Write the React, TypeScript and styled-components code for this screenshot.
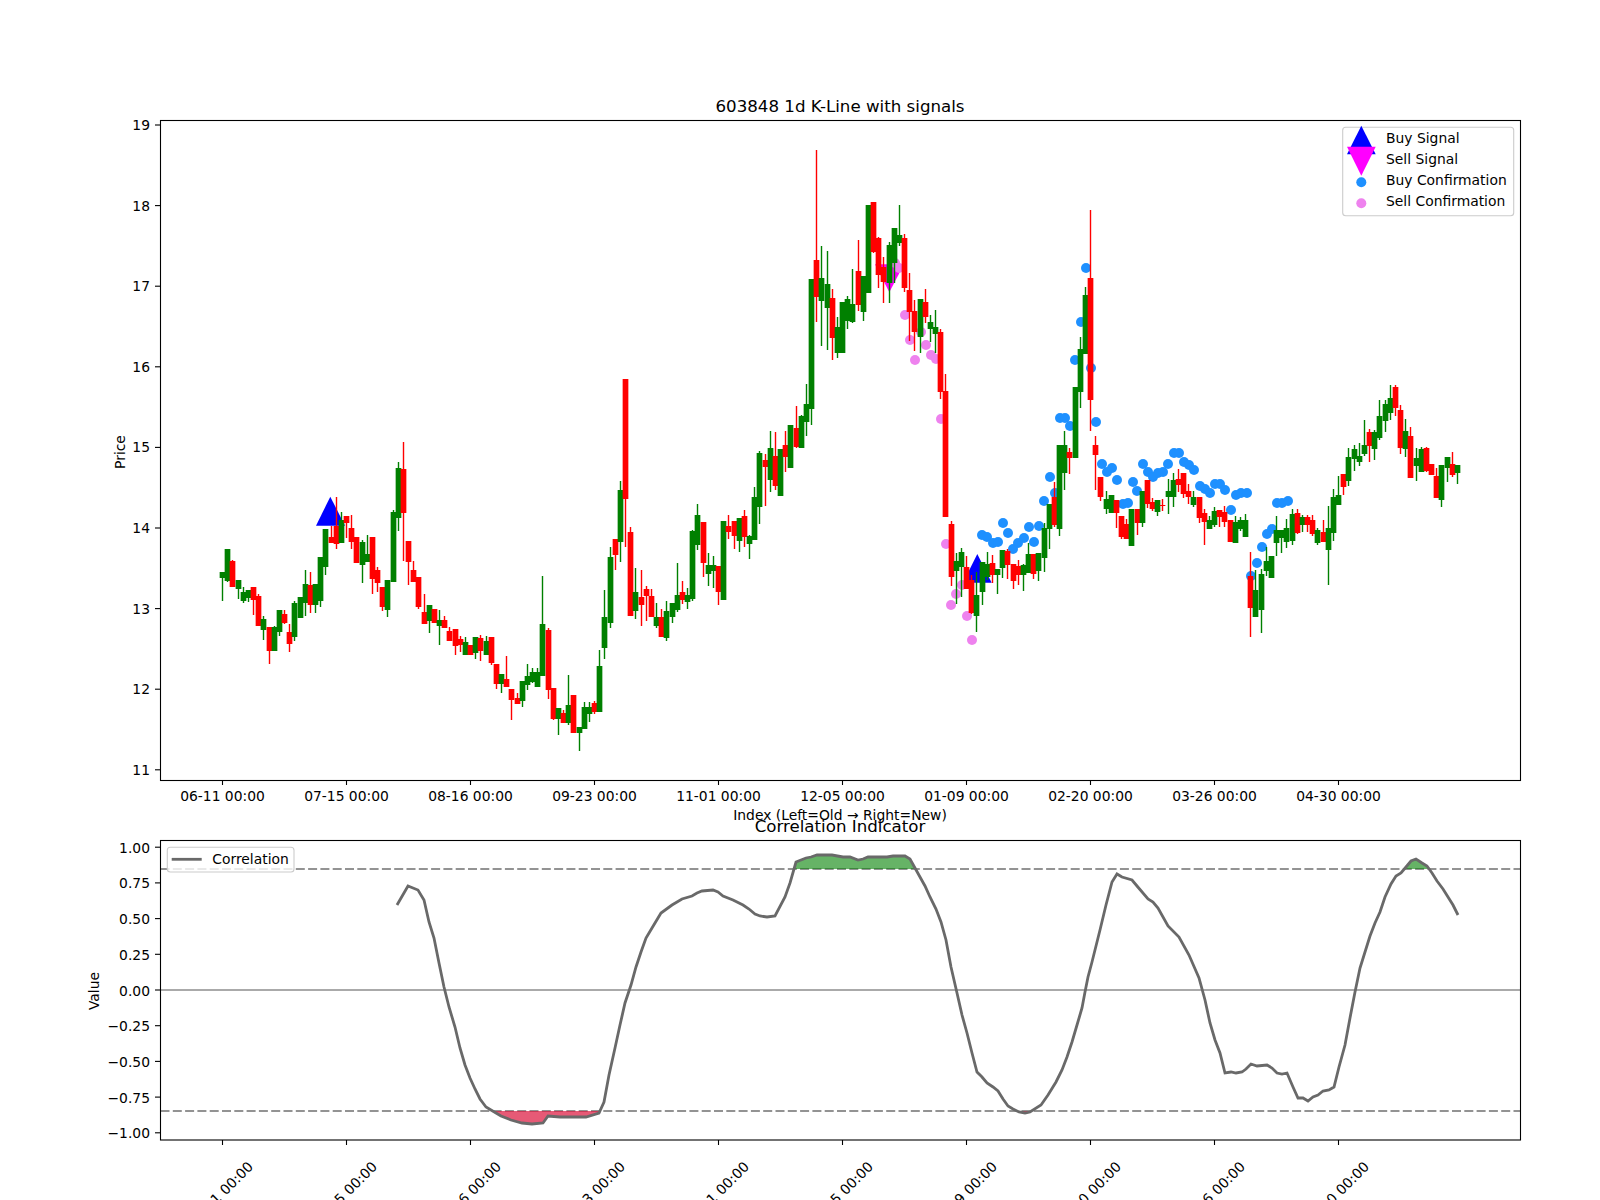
import React from "react";
import styled, { createGlobalStyle } from "styled-components";

const GlobalStyle = createGlobalStyle`
  html, body {
    margin: 0;
    padding: 0;
    background: #fff;
    overflow: hidden;
  }
`;

const Figure = styled.svg`
  display: block;
  width: 1600px;
  height: 1200px;
  font-family: "DejaVu Sans", sans-serif;
`;

const Spine = styled.rect`
  fill: none;
  stroke: #000;
  stroke-width: 1.1;
`;

const Tick = styled.line`
  stroke: #000;
  stroke-width: 1.1;
`;

const Label = styled.text<{ $size?: number; $anchor?: string }>`
  font-size: ${(p) => p.$size ?? 13.89}px;
  text-anchor: ${(p) => p.$anchor ?? "middle"};
  fill: #000;
`;

const Body = styled.rect<{ $up: boolean }>`
  fill: ${(p) => (p.$up ? "#ff0000" : "#008000")};
`;

const Wick = styled.line<{ $up: boolean }>`
  stroke: ${(p) => (p.$up ? "#ff0000" : "#008000")};
  stroke-width: 1.4;
`;

const Dot = styled.circle<{ $sell?: boolean }>`
  fill: ${(p) => (p.$sell ? "#ee82ee" : "#1e90ff")};
`;

const Marker = styled.polygon<{ $sell?: boolean }>`
  fill: ${(p) => (p.$sell ? "#ff00ff" : "#0000ff")};
`;

const LegendBox = styled.rect`
  fill: #fff;
  fill-opacity: 0.8;
  stroke: #ccc;
  stroke-width: 1.1;
`;

const Threshold = styled.line`
  stroke: #808080;
  stroke-opacity: 0.85;
  stroke-width: 2.1;
  stroke-dasharray: 9 3.3;
`;

const ZeroLine = styled.line`
  stroke: #aaaaaa;
  stroke-width: 2.1;
`;

const CorrLine = styled.polyline`
  fill: none;
  stroke: #696969;
  stroke-width: 2.8;
`;

const CorrFill = styled.polygon<{ $high?: boolean }>`
  fill: ${(p) => (p.$high ? "#008000" : "#dc143c")};
  fill-opacity: ${(p) => (p.$high ? 0.6 : 0.7)};
`;

const LegendLine = styled.line`
  stroke: #696969;
  stroke-width: 2.8;
`;

// g / r, body top, body bottom, wick high, wick low (screen y)
type Candle = [string, number, number, number?, number?];

const CANDLES: Candle[] = [
  ["g", 572, 578, 572, 601], ["g", 549, 581, 549, 582], ["r", 561, 587, 560], ["g", 580, 589, 580, 599],
  ["g", 592, 601, 587, 603], ["g", 590, 598, 590, 602], ["r", 587, 600, 587, 615], ["r", 596, 626, 594],
  ["g", 619, 630, 616, 640], ["r", 627, 651, 627, 664], ["g", 627, 651, 626], ["g", 610, 632, 610, 636],
  ["r", 614, 623, 610, 624], ["r", 632, 644, 624, 652], ["g", 603, 637, 601, 641], ["g", 597, 618],
  ["g", 584, 603, 570, 616], ["r", 585, 605, 572, 613], ["g", 584, 605, 584, 613], ["g", 557, 601, 557, 607],
  ["g", 529, 567, 529, 575], ["r", 537, 543, 526], ["r", 526, 544, 497, 549], ["g", 520, 543, 512],
  ["r", 516, 523, 516, 538], ["r", 528, 542, 515, 549], ["r", 537, 563], ["g", 542, 565, 540, 583],
  ["g", 554, 562, 535], ["r", 537, 579, 537, 594], ["r", 570, 583, 567, 592], ["r", 587, 607, 587, 611],
  ["g", 580, 610, 580, 617], ["g", 512, 582, 510], ["g", 468, 518, 462, 531], ["r", 469, 513, 442, 561],
  ["r", 541, 562, 541, 585], ["r", 570, 582, 561], ["r", 577, 607, 577, 609], ["r", 612, 624, 594],
  ["g", 605, 621, 605, 633], ["r", 609, 623], ["g", 620, 626, 610, 645], ["r", 620, 628, 616],
  ["r", 631, 641, 627], ["r", 629, 646, 629, 655], ["r", 639, 645, 636, 652], ["g", 642, 655, 637],
  ["r", 645, 655], ["g", 637, 653, 637, 659], ["r", 638, 651, 635, 661], ["g", 641, 655, 636],
  ["r", 637, 663, 637, 665], ["r", 664, 684, 664, 689], ["g", 674, 684, 674, 693], ["r", 679, 687, 656],
  ["r", 689, 700, 689, 720], ["r", 698, 704, 693], ["g", 681, 701, 681, 707], ["g", 676, 685, 664, 690],
  ["g", 672, 682, 668, 683], ["g", 672, 687, 668], ["g", 624, 676, 576], ["r", 630, 690, 628, 699],
  ["r", 688, 719, 688, 720], ["g", 708, 719, 708, 735], ["r", 713, 723, 710], ["g", 705, 723, 675, 725],
  ["r", 695, 733], ["g", 727, 733, 727, 751], ["g", 707, 729, 702], ["g", 707, 714, 702, 722],
  ["r", 703, 712, 701, 714], ["g", 666, 712, 650], ["g", 617, 648, 590, 659], ["g", 557, 623, 547, 628],
  ["r", 539, 555, 539, 570], ["g", 490, 542, 481, 562], ["r", 379, 499, 379, 547], ["r", 532, 616, 527],
  ["g", 592, 611, 568, 619], ["r", 597, 605, 570, 626], ["r", 589, 596, 586, 621], ["r", 596, 617, 589],
  ["g", 617, 626, 603, 628], ["r", 617, 637, 609], ["g", 611, 638, 601, 641], ["g", 603, 617, 603, 623],
  ["g", 595, 610, 563, 612], ["r", 592, 600, 581, 604], ["g", 595, 602, 588, 609], ["g", 531, 599, 530, 601],
  ["g", 515, 545, 504, 550], ["r", 522, 563, 522, 577], ["g", 565, 574, 553, 586], ["g", 565, 571, 556, 588],
  ["r", 566, 592, 566, 605], ["g", 521, 600], ["r", 526, 532, 515, 539], ["r", 521, 536, 521, 549],
  ["g", 518, 541, 518, 552], ["r", 516, 537, 510, 547], ["g", 536, 544, 535, 559], ["g", 497, 540, 487],
  ["g", 453, 507, 451, 524], ["r", 460, 467, 454, 506], ["g", 448, 480, 431, 492], ["r", 456, 486, 432, 490],
  ["g", 449, 496], ["r", 445, 457, 431, 472], ["g", 425, 468], ["r", 428, 447, 406, 448],
  ["g", 416, 448, 415], ["g", 404, 422, 384, 436], ["g", 279, 409, 279, 425], ["r", 260, 297, 150, 322],
  ["g", 278, 301, 246, 346], ["g", 284, 308, 251, 350], ["r", 298, 338, 289, 360], ["g", 327, 353, 317, 358],
  ["g", 302, 353], ["g", 299, 321, 296, 329], ["g", 304, 322, 269, 323], ["r", 271, 305, 240, 311],
  ["g", 276, 312, 276, 321], ["g", 205, 293], ["r", 202, 252, 202, 253], ["r", 238, 275, 237, 288],
  ["r", 267, 282, 257, 303], ["g", 245, 283, 242, 303], ["g", 228, 263, 228, 283], ["g", 235, 243, 205, 246],
  ["r", 238, 288, 234, 292], ["r", 290, 312, 273, 341], ["r", 311, 332, 300, 351], ["g", 299, 337, 299, 353],
  ["r", 302, 317, 289, 323], ["g", 322, 329, 315, 342], ["g", 327, 334, 310, 353], ["r", 332, 392, 329, 399],
  ["r", 391, 517, 374], ["r", 524, 577, 521, 586], ["g", 561, 571, 553, 604], ["g", 552, 567, 548, 597],
  ["r", 567, 589, 556], ["r", 580, 613, 575, 614], ["g", 595, 616, 572, 632], ["g", 562, 592, 562, 605],
  ["g", 564, 577, 552, 580], ["r", 563, 575, 555, 583], ["g", 569, 575, 569, 594], ["g", 550, 568, 550, 578],
  ["r", 551, 565, 549, 579], ["r", 564, 581, 564, 589], ["r", 566, 575, 560, 585], ["g", 565, 575, 564, 591],
  ["g", 554, 573, 543], ["r", 554, 574, 554, 579], ["g", 553, 571, 553, 581], ["g", 528, 558, 523, 572],
  ["g", 504, 529, 504, 549], ["r", 497, 525, 482, 527], ["g", 445, 529, 445, 536], ["g", 445, 473, 431, 490],
  ["r", 452, 458, 448, 474], ["g", 387, 458], ["g", 349, 392, 337, 408], ["g", 295, 354, 287],
  ["r", 278, 400, 210, 431], ["r", 445, 455, 436, 490], ["r", 477, 497, 477, 501], ["g", 499, 509, 491, 514],
  ["g", 495, 513], ["r", 500, 513, 500, 528], ["r", 516, 537, 516, 539], ["r", 524, 539, 519],
  ["g", 509, 546], ["r", 509, 523, 509, 535], ["g", 491, 523, 491, 527], ["r", 480, 504, 480, 508],
  ["r", 502, 509, 498, 511], ["g", 500, 512, 500, 516], ["r", 505, 506, 499, 511], ["g", 491, 497, 479, 514],
  ["g", 480, 497, 473, 507], ["r", 479, 485, 469, 492], ["r", 473, 494, 473, 498], ["r", 491, 497, 484, 504],
  ["g", 497, 505, 491, 507], ["r", 497, 518, 497, 523], ["r", 513, 522, 509, 545], ["g", 520, 529, 516],
  ["g", 511, 525, 507, 527], ["r", 510, 517, 510, 527], ["r", 512, 522, 506, 527], ["r", 520, 542],
  ["g", 522, 543, 516], ["g", 520, 529, 517, 531], ["g", 520, 537, 514], ["r", 576, 608, 552, 637],
  ["g", 590, 617, 570], ["g", 574, 610, 569, 633], ["g", 561, 571, 547, 576], ["g", 556, 578],
  ["g", 530, 543, 516, 556], ["g", 530, 538, 530, 553], ["g", 528, 542, 519, 548], ["g", 514, 541, 509, 545],
  ["r", 513, 533, 509, 534], ["g", 517, 525, 515, 532], ["r", 517, 525, 515, 532], ["r", 520, 534, 515, 536],
  ["g", 530, 543, 528, 545], ["r", 532, 542, 520], ["g", 528, 550, 506, 585], ["g", 497, 533, 489, 541],
  ["g", 495, 505, 476], ["r", 474, 487, 474, 495], ["g", 457, 481, 448, 486], ["g", 449, 459, 445, 471],
  ["g", 456, 462, 443, 466], ["g", 445, 454, 420, 456], ["r", 432, 446, 429, 462], ["g", 432, 449, 430, 460],
  ["g", 416, 438, 400, 440], ["g", 404, 421, 400, 432], ["g", 398, 413, 385, 420], ["r", 387, 408, 385, 416],
  ["r", 410, 448, 405, 454], ["g", 431, 449, 419, 457], ["r", 436, 478, 427], ["g", 458, 466, 448, 481],
  ["g", 449, 472, 447], ["r", 448, 471, 447, 472], ["r", 464, 475], ["r", 476, 498, 468],
  ["g", 465, 500, 465, 507], ["g", 457, 468, 457, 482], ["r", 464, 475, 452, 477], ["g", 465, 473, 465, 484],
];

const SELL_DOTS = [
  [895, 263], [899, 268], [905, 315], [910, 340], [915, 360], [921, 332], [926, 345], [931, 355],
  [936, 359], [941, 419], [946, 544], [951, 605], [956, 594], [962, 585], [967, 616], [972, 640],
];

const BUY_DOTS = [
  [982, 535], [987, 537], [993, 543], [998, 542], [1003, 523], [1008, 533], [1013, 549], [1018, 543],
  [1024, 538], [1029, 527], [1034, 542], [1039, 526], [1044, 501], [1050, 477], [1055, 493], [1060, 418],
  [1065, 418], [1070, 426], [1075, 360], [1081, 322], [1086, 268], [1091, 368], [1096, 422], [1102, 464],
  [1107, 472], [1112, 468], [1117, 480], [1123, 504], [1128, 503], [1133, 482], [1137, 491], [1143, 464],
  [1148, 472], [1153, 477], [1158, 473], [1163, 472], [1168, 464], [1174, 453], [1179, 453], [1184, 462],
  [1189, 465], [1194, 470], [1200, 486], [1205, 489], [1210, 493], [1215, 484], [1220, 484], [1225, 490],
  [1231, 510], [1236, 495], [1241, 493], [1247, 493], [1251, 576], [1257, 563], [1262, 547], [1267, 534],
  [1272, 529], [1277, 503], [1282, 503], [1288, 501],
];

const CORR: number[][] = [
  [397, 905], [408, 886], [418, 890], [424, 900], [429, 922], [434, 938], [439, 963], [444, 987], [449, 1007],
  [455, 1027], [460, 1048], [465, 1065], [470, 1078], [475, 1089], [480, 1099], [486, 1107], [491, 1110],
  [496, 1113], [501, 1116], [511, 1120], [522, 1123], [532, 1124], [543, 1123], [548, 1116], [560, 1117],
  [573, 1117], [586, 1117], [599, 1113], [604, 1102], [609, 1075], [615, 1048], [620, 1025], [625, 1003],
  [631, 985], [636, 967], [641, 952], [646, 938], [652, 928], [661, 913], [672, 905], [682, 899], [692, 896],
  [697, 893], [702, 891], [713, 890], [718, 892], [723, 896], [733, 900], [743, 905], [749, 909], [755, 914],
  [760, 916], [767, 917], [775, 916], [785, 897], [790, 883], [796, 862], [801, 860], [806, 858], [811, 857],
  [817, 855], [832, 855], [843, 857], [850, 857], [858, 860], [863, 859], [868, 857], [887, 857], [893, 856],
  [905, 856], [910, 859], [915, 868], [920, 877], [925, 886], [930, 897], [936, 909], [941, 922], [946, 940],
  [951, 967], [957, 993], [962, 1015], [967, 1033], [972, 1053], [977, 1072], [982, 1077], [987, 1083],
  [993, 1087], [998, 1091], [1003, 1099], [1008, 1106], [1013, 1109], [1019, 1112], [1025, 1113], [1030, 1112],
  [1041, 1105], [1048, 1095], [1056, 1082], [1062, 1070], [1067, 1057], [1072, 1042], [1077, 1025], [1082, 1008],
  [1085, 992], [1088, 977], [1092, 962], [1100, 930], [1106, 905], [1112, 882], [1117, 874], [1122, 877],
  [1132, 880], [1137, 886], [1148, 899], [1153, 902], [1158, 908], [1168, 926], [1179, 937], [1189, 955],
  [1199, 978], [1205, 1000], [1210, 1023], [1215, 1040], [1220, 1053], [1225, 1073], [1231, 1072], [1236, 1073],
  [1242, 1072], [1246, 1069], [1251, 1064], [1257, 1066], [1267, 1065], [1272, 1068], [1277, 1073], [1282, 1074],
  [1287, 1073], [1293, 1087], [1298, 1098], [1303, 1098], [1308, 1101], [1313, 1097], [1318, 1095], [1323, 1091],
  [1329, 1090], [1334, 1087], [1339, 1067], [1345, 1045], [1350, 1018], [1355, 992], [1360, 968], [1365, 952],
  [1370, 936], [1375, 923], [1380, 912], [1385, 897], [1391, 884], [1396, 876], [1401, 873], [1406, 867],
  [1411, 861], [1416, 859], [1422, 863], [1427, 866], [1432, 873], [1437, 881], [1443, 889], [1448, 897],
  [1453, 905], [1458, 915],
];

const DATES = [
  "06-11 00:00", "07-15 00:00", "08-16 00:00", "09-23 00:00", "11-01 00:00",
  "12-05 00:00", "01-09 00:00", "02-20 00:00", "03-26 00:00", "04-30 00:00",
];
const PRICES = [19, 18, 17, 16, 15, 14, 13, 12, 11];
const VALUES = [1, 0.75, 0.5, 0.25, 0, -0.25, -0.5, -0.75, -1];

const LEFT = 160.5;
const RIGHT = 1520.5;
const HIGH_Y = 869;
const LOW_Y = 1111;

const candleX = (i: number) => Math.round(222 + 5.167 * i);
const tickX = (i: number) => Math.floor(222.7 + 124 * i) + 0.5;
const priceY = (p: number) => 125 + (19 - p) * 80.6;
const valueY = (v: number) => 990 - 142.8 * v;
const formatValue = (v: number) => v.toFixed(2).replace("-", "\u2212");
const corrPoints = CORR.map((p) => p.join(",")).join(" ");
const corrFill = (y: number) => `${corrPoints} 1458,${y} 397,${y}`;

const App = () => {
  return (
    <>
      <GlobalStyle />
      <Figure viewBox="0 0 1600 1200">
        <defs>
          <clipPath id="above">
            <rect x={LEFT} y={840} width={RIGHT - LEFT} height={HIGH_Y - 840} />
          </clipPath>
          <clipPath id="below">
            <rect x={LEFT} y={LOW_Y} width={RIGHT - LEFT} height={1140 - LOW_Y} />
          </clipPath>
        </defs>

        {/* price chart */}
        <Label x={840} y={112} $size={16.67}>603848 1d K-Line with signals</Label>
        <Marker points="330.3,496.7 316,525.7 345,525.7" />
        <Marker points="977.3,554 963,582.7 991.7,582.7" />
        <Marker $sell points="875,264.3 904,264.3 889.3,292.3" />
        {SELL_DOTS.map(([x, y], i) => <Dot key={i} $sell cx={x} cy={y} r={5} />)}
        {BUY_DOTS.map(([x, y], i) => <Dot key={i} cx={x} cy={y} r={5} />)}
        {CANDLES.map(([c, top, bottom, hi, lo], i) => {
          const cx = candleX(i);
          const up = c === "r";
          return (
            <g key={i}>
              <Wick $up={up} x1={cx + 0.5} x2={cx + 0.5} y1={hi ?? top} y2={lo ?? bottom} />
              <Body $up={up} x={cx - 2.35} y={top} width={5.7} height={bottom - top} />
            </g>
          );
        })}
        <Spine x={LEFT} y={120.5} width={RIGHT - LEFT} height={660} />
        {PRICES.map((p) => (
          <g key={p}>
            <Tick x1={155} x2={LEFT} y1={priceY(p)} y2={priceY(p)} />
            <Label $anchor="end" x={150} y={priceY(p) + 5}>{p}</Label>
          </g>
        ))}
        <Label x={125} y={452} transform="rotate(-90 125 452)">Price</Label>
        {DATES.map((d, i) => (
          <g key={d}>
            <Tick x1={tickX(i)} x2={tickX(i)} y1={780} y2={785} />
            <Label x={tickX(i)} y={801}>{d}</Label>
          </g>
        ))}

        {/* price legend */}
        <LegendBox x={1342.7} y={127.3} width={171} height={88.4} rx={3} />
        <Marker points="1361.3,125.7 1347,154.3 1375.7,154.3" />
        <Marker $sell points="1347,146.7 1375.7,146.7 1361.3,175.7" />
        <Dot cx={1361.3} cy={182.3} r={5} />
        <Dot $sell cx={1361.3} cy={203.3} r={5} />
        <Label $anchor="start" x={1386} y={142.5}>Buy Signal</Label>
        <Label $anchor="start" x={1386} y={163.5}>Sell Signal</Label>
        <Label $anchor="start" x={1386} y={184.5}>Buy Confirmation</Label>
        <Label $anchor="start" x={1386} y={205.5}>Sell Confirmation</Label>

        <Label x={840} y={820}>Index (Left=Old → Right=New)</Label>
        <Label x={840} y={832} $size={16.67}>Correlation Indicator</Label>

        {/* correlation chart */}
        <ZeroLine x1={LEFT} x2={RIGHT} y1={990} y2={990} />
        <Threshold x1={LEFT} x2={RIGHT} y1={HIGH_Y} y2={HIGH_Y} />
        <Threshold x1={LEFT} x2={RIGHT} y1={LOW_Y} y2={LOW_Y} />
        <CorrFill $high points={corrFill(HIGH_Y)} clipPath="url(#above)" />
        <CorrFill points={corrFill(LOW_Y)} clipPath="url(#below)" />
        <CorrLine points={corrPoints} />
        <Spine x={LEFT} y={840.5} width={RIGHT - LEFT} height={299.5} />
        {VALUES.map((v) => (
          <g key={v}>
            <Tick x1={155} x2={LEFT} y1={valueY(v)} y2={valueY(v)} />
            <Label $anchor="end" x={150} y={valueY(v) + 5.5}>{formatValue(v)}</Label>
          </g>
        ))}
        <Label x={99} y={991} transform="rotate(-90 99 991)">Value</Label>
        {DATES.map((d, i) => (
          <g key={d}>
            <Tick x1={tickX(i)} x2={tickX(i)} y1={1140} y2={1145} />
            <Label x={tickX(i) - 2} y={1199} transform={`rotate(-45 ${tickX(i) - 2} 1194)`}>{d}</Label>
          </g>
        ))}

        {/* correlation legend */}
        <LegendBox x={167.3} y={847.3} width={126.7} height={24.7} rx={3} />
        <LegendLine x1={171.7} x2={201.7} y1={859.3} y2={859.3} />
        <Label $anchor="start" x={212.3} y={863.5}>Correlation</Label>
      </Figure>
    </>
  );
};

export default App;
